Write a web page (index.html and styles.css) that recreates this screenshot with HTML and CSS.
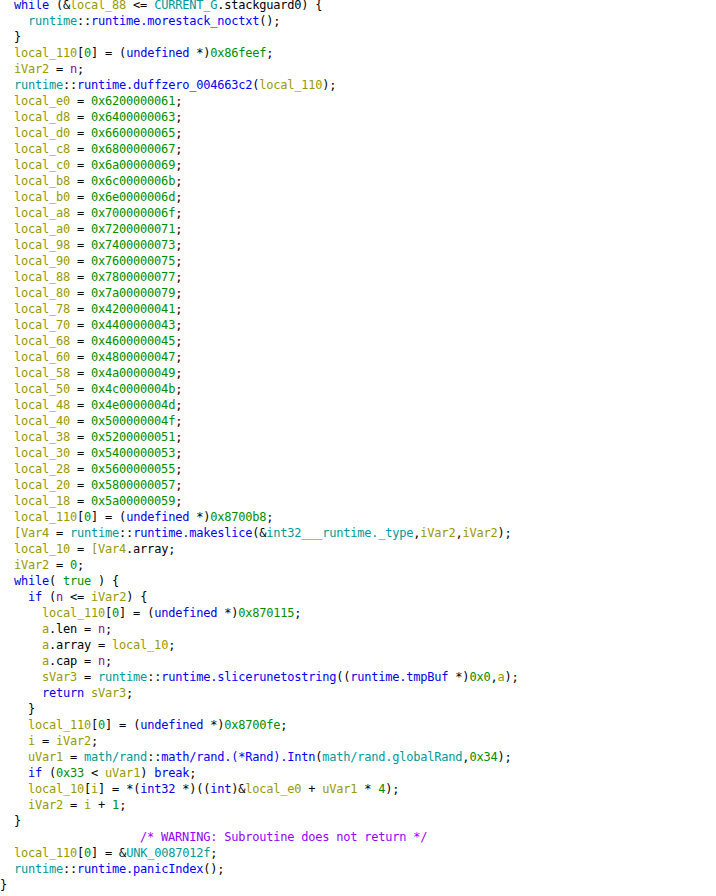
FILE: index.html
```html
<!DOCTYPE html>
<html lang="en">
<head>
    <meta charset="UTF-8">
    <title>Decompile: main.randString</title>
    <link rel="stylesheet" href="styles.css">
</head>
<body>

<pre class="code">  <span class="kw">while</span> (&amp;<span class="var">local_88</span> &lt;= <span class="glb">CURRENT_G</span>.stackguard0) {
    <span class="glb">runtime</span>::<span class="fn">runtime.morestack_noctxt</span>();
  }
  <span class="var">local_110</span>[<span class="con">0</span>] = (<span class="kw">undefined</span> *)<span class="con">0x86feef</span>;
  <span class="var">iVar2</span> = <span class="par">n</span>;
  <span class="glb">runtime</span>::<span class="fn">runtime.duffzero_004663c2</span>(<span class="var">local_110</span>);
  <span class="var">local_e0</span> = <span class="con">0x6200000061</span>;
  <span class="var">local_d8</span> = <span class="con">0x6400000063</span>;
  <span class="var">local_d0</span> = <span class="con">0x6600000065</span>;
  <span class="var">local_c8</span> = <span class="con">0x6800000067</span>;
  <span class="var">local_c0</span> = <span class="con">0x6a00000069</span>;
  <span class="var">local_b8</span> = <span class="con">0x6c0000006b</span>;
  <span class="var">local_b0</span> = <span class="con">0x6e0000006d</span>;
  <span class="var">local_a8</span> = <span class="con">0x700000006f</span>;
  <span class="var">local_a0</span> = <span class="con">0x7200000071</span>;
  <span class="var">local_98</span> = <span class="con">0x7400000073</span>;
  <span class="var">local_90</span> = <span class="con">0x7600000075</span>;
  <span class="var">local_88</span> = <span class="con">0x7800000077</span>;
  <span class="var">local_80</span> = <span class="con">0x7a00000079</span>;
  <span class="var">local_78</span> = <span class="con">0x4200000041</span>;
  <span class="var">local_70</span> = <span class="con">0x4400000043</span>;
  <span class="var">local_68</span> = <span class="con">0x4600000045</span>;
  <span class="var">local_60</span> = <span class="con">0x4800000047</span>;
  <span class="var">local_58</span> = <span class="con">0x4a00000049</span>;
  <span class="var">local_50</span> = <span class="con">0x4c0000004b</span>;
  <span class="var">local_48</span> = <span class="con">0x4e0000004d</span>;
  <span class="var">local_40</span> = <span class="con">0x500000004f</span>;
  <span class="var">local_38</span> = <span class="con">0x5200000051</span>;
  <span class="var">local_30</span> = <span class="con">0x5400000053</span>;
  <span class="var">local_28</span> = <span class="con">0x5600000055</span>;
  <span class="var">local_20</span> = <span class="con">0x5800000057</span>;
  <span class="var">local_18</span> = <span class="con">0x5a00000059</span>;
  <span class="var">local_110</span>[<span class="con">0</span>] = (<span class="kw">undefined</span> *)<span class="con">0x8700b8</span>;
  <span class="var">[Var4</span> = <span class="glb">runtime</span>::<span class="fn">runtime.makeslice</span>(&amp;<span class="glb">int32___runtime._type</span>,<span class="var">iVar2</span>,<span class="var">iVar2</span>);
  <span class="var">local_10</span> = <span class="var">[Var4</span>.array;
  <span class="var">iVar2</span> = <span class="con">0</span>;
  <span class="kw">while</span>( <span class="con">true</span> ) {
    <span class="kw">if</span> (<span class="par">n</span> &lt;= <span class="var">iVar2</span>) {
      <span class="var">local_110</span>[<span class="con">0</span>] = (<span class="kw">undefined</span> *)<span class="con">0x870115</span>;
      <span class="var">a</span>.len = <span class="par">n</span>;
      <span class="var">a</span>.array = <span class="var">local_10</span>;
      <span class="var">a</span>.cap = <span class="par">n</span>;
      <span class="var">sVar3</span> = <span class="glb">runtime</span>::<span class="fn">runtime.slicerunetostring</span>((<span class="kw">runtime.tmpBuf</span> *)<span class="con">0x0</span>,<span class="var">a</span>);
      <span class="kw">return</span> <span class="var">sVar3</span>;
    }
    <span class="var">local_110</span>[<span class="con">0</span>] = (<span class="kw">undefined</span> *)<span class="con">0x8700fe</span>;
    <span class="var">i</span> = <span class="var">iVar2</span>;
    <span class="var">uVar1</span> = <span class="glb">math/rand</span>::<span class="fn">math/rand.(*Rand).Intn</span>(<span class="glb">math/rand.globalRand</span>,<span class="con">0x34</span>);
    <span class="kw">if</span> (<span class="con">0x33</span> &lt; <span class="var">uVar1</span>) <span class="kw">break</span>;
    <span class="var">local_10</span>[<span class="var">i</span>] = *(<span class="kw">int32</span> *)((<span class="kw">int</span>)&amp;<span class="var">local_e0</span> + <span class="var">uVar1</span> * <span class="con">4</span>);
    <span class="var">iVar2</span> = <span class="var">i</span> + <span class="con">1</span>;
  }
                    <span class="cmt">/* WARNING: Subroutine does not return */</span>
  <span class="var">local_110</span>[<span class="con">0</span>] = &amp;<span class="glb">UNK_0087012f</span>;
  <span class="glb">runtime</span>::<span class="fn">runtime.panicIndex</span>();
}</pre>

</body>
</html>
```

FILE: styles.css
```css
body {
    margin: 0;
    background-color: #fff;
    overflow: hidden;
}
.code {
    margin: -3px 0 0 0;
    font-family: 'DejaVu Sans Mono', monospace;
    font-size: 12px;
    letter-spacing: -0.22px;
    line-height: 16px;
    color: #000;
}
.kw {
    color: #0001e6;
}
.fn {
    color: #0000ff;
}
.var {
    color: #999900;
}
.par {
    color: #9b009b;
}
.con {
    color: #008e00;
}
.glb {
    color: #009999;
}
.cmt {
    color: #9600ff;
}
```
